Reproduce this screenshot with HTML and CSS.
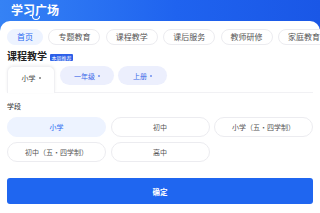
FILE: index.html
```html
<!DOCTYPE html>
<html lang="zh-CN">
<head>
<meta charset="utf-8">
<title>学习广场</title>
<link rel="stylesheet" href="styles.css">
</head>
<body>
<div class="page">
  <header class="top">
    <h1 class="title">学习广场</h1>
  </header>
  <main class="sheet">
    <nav class="tabs">
      <span class="tab tab-active">首页</span>
      <span class="tab">专题教育</span>
      <span class="tab">课程教学</span>
      <span class="tab">课后服务</span>
      <span class="tab">教师研修</span>
      <span class="tab">家庭教育</span>
    </nav>
    <div class="section-head">
      <h2 class="section-title">课程教学</h2>
      <span class="badge">本周推荐</span>
    </div>
    <div class="filters">
      <div class="filter filter-open">小学<i class="caret"></i></div>
      <div class="filter filter-pill filter-grade">一年级<i class="caret"></i></div>
      <div class="filter filter-pill filter-term">上册<i class="caret"></i></div>
    </div>
    <section class="panel">
      <div class="panel-label">学段</div>
      <div class="options">
        <span class="option option-active">小学</span>
        <span class="option">初中</span>
        <span class="option">小学（五·四学制）</span>
        <span class="option">初中（五·四学制）</span>
        <span class="option">高中</span>
      </div>
    </section>
    <button class="confirm">确定</button>
  </main>
</div>
</body>
</html>
```
FILE: styles.css
```css
* { box-sizing: border-box; margin: 0; padding: 0; }
html, body { width: 320px; height: 213px; overflow: hidden; }
body {
  font-family: "Noto Sans CJK SC", "Noto Sans", sans-serif;
  background: #ffffff;
  color: #333;
}
.page {
  width: 320px;
  height: 213px;
  background: linear-gradient(90deg, #3582f5 0%, #1f63ef 55%, #1a57e6 100%);
  display: flex;
  flex-direction: column;
  overflow: hidden;
}
.top {
  height: 21px;
  padding: 2px 0 0 11px;
  display: flex;
  align-items: flex-start;
}
.title {
  position: relative;
  font-size: 12px;
  line-height: 15px;
  font-weight: 700;
  color: #fff;
}
.title::after {
  content: "";
  position: absolute;
  left: 50%;
  top: 14px;
  width: 6px;
  height: 3px;
  margin-left: -3px;
  border: 1.2px solid #fff;
  border-top: none;
  border-radius: 0 0 4px 4px;
}
.sheet {
  flex: 1;
  background: #fff;
  border-radius: 10px 10px 0 0;
  padding: 8px 7px 0;
  display: flex;
  flex-direction: column;
}
.tabs {
  display: flex;
  gap: 5.4px;
  white-space: nowrap;
}
.tab {
  flex: none;
  height: 16px;
  padding: 0 9px;
  border: 1px solid #ececf0;
  border-radius: 8px;
  font-size: 8px;
  line-height: 14px;
  color: #555;
  background: #fff;
}
.tab-active {
  background: #edf3ff;
  border-color: #edf3ff;
  color: #2a6af0;
}
.section-head {
  margin-top: 5px;
  display: flex;
  align-items: center;
  gap: 3px;
  height: 12px;
}
.section-title {
  font-size: 10px;
  line-height: 12px;
  font-weight: 700;
  color: #222;
}
.badge {
  background: #2c5fe8;
  color: #fff;
  font-size: 5px;
  line-height: 7px;
  height: 7px;
  padding: 0 1.5px;
  margin-top: 2px;
  border-radius: 1px;
}
.filters {
  margin-top: 4px;
  height: 27px;
  display: flex;
  align-items: flex-start;
  gap: 5px;
  border-bottom: 1px solid #f1f1f4;
}
.filter {
  flex: none;
  display: flex;
  align-items: center;
  justify-content: center;
  gap: 3px;
  font-size: 7px;
  white-space: nowrap;
}
.filter-open {
  height: 27px;
  width: 48px;
  padding-bottom: 5px;
  background: #fff;
  color: #444;
  border-radius: 6px 6px 0 0;
  box-shadow: 0 -1px 3px rgba(0, 0, 0, 0.06);
  border: 1px solid #f0f0f3;
  border-bottom: none;
  position: relative;
  z-index: 1;
}
.filter-pill {
  height: 19px;
  background: #eceffd;
  color: #3a68e8;
  border-radius: 10px;
}
.filter-grade { width: 54px; }
.filter-term { width: 49px; margin-left: -1px; }
.caret {
  width: 2px;
  height: 2px;
  border-radius: 1px;
  background: currentColor;
  opacity: 0.7;
}
.panel {
  padding-top: 8px;
}
.panel-label {
  font-size: 7px;
  line-height: 10px;
  color: #333;
}
.options {
  margin-top: 6px;
  display: grid;
  grid-template-columns: repeat(3, 1fr);
  column-gap: 4.5px;
  row-gap: 5px;
}
.option {
  height: 20px;
  border: 1px solid #ececf0;
  border-radius: 10px;
  font-size: 7px;
  line-height: 18px;
  text-align: center;
  color: #555;
  background: #fff;
}
.option-active {
  background: #edf3ff;
  border-color: #edf3ff;
  color: #2a6af0;
}
.confirm {
  margin-top: 16px;
  height: 26px;
  width: 100%;
  border: none;
  border-radius: 3px;
  background: #1f66f0;
  color: #fff;
  font-family: inherit;
  font-size: 7.5px;
  font-weight: 700;
}
```
